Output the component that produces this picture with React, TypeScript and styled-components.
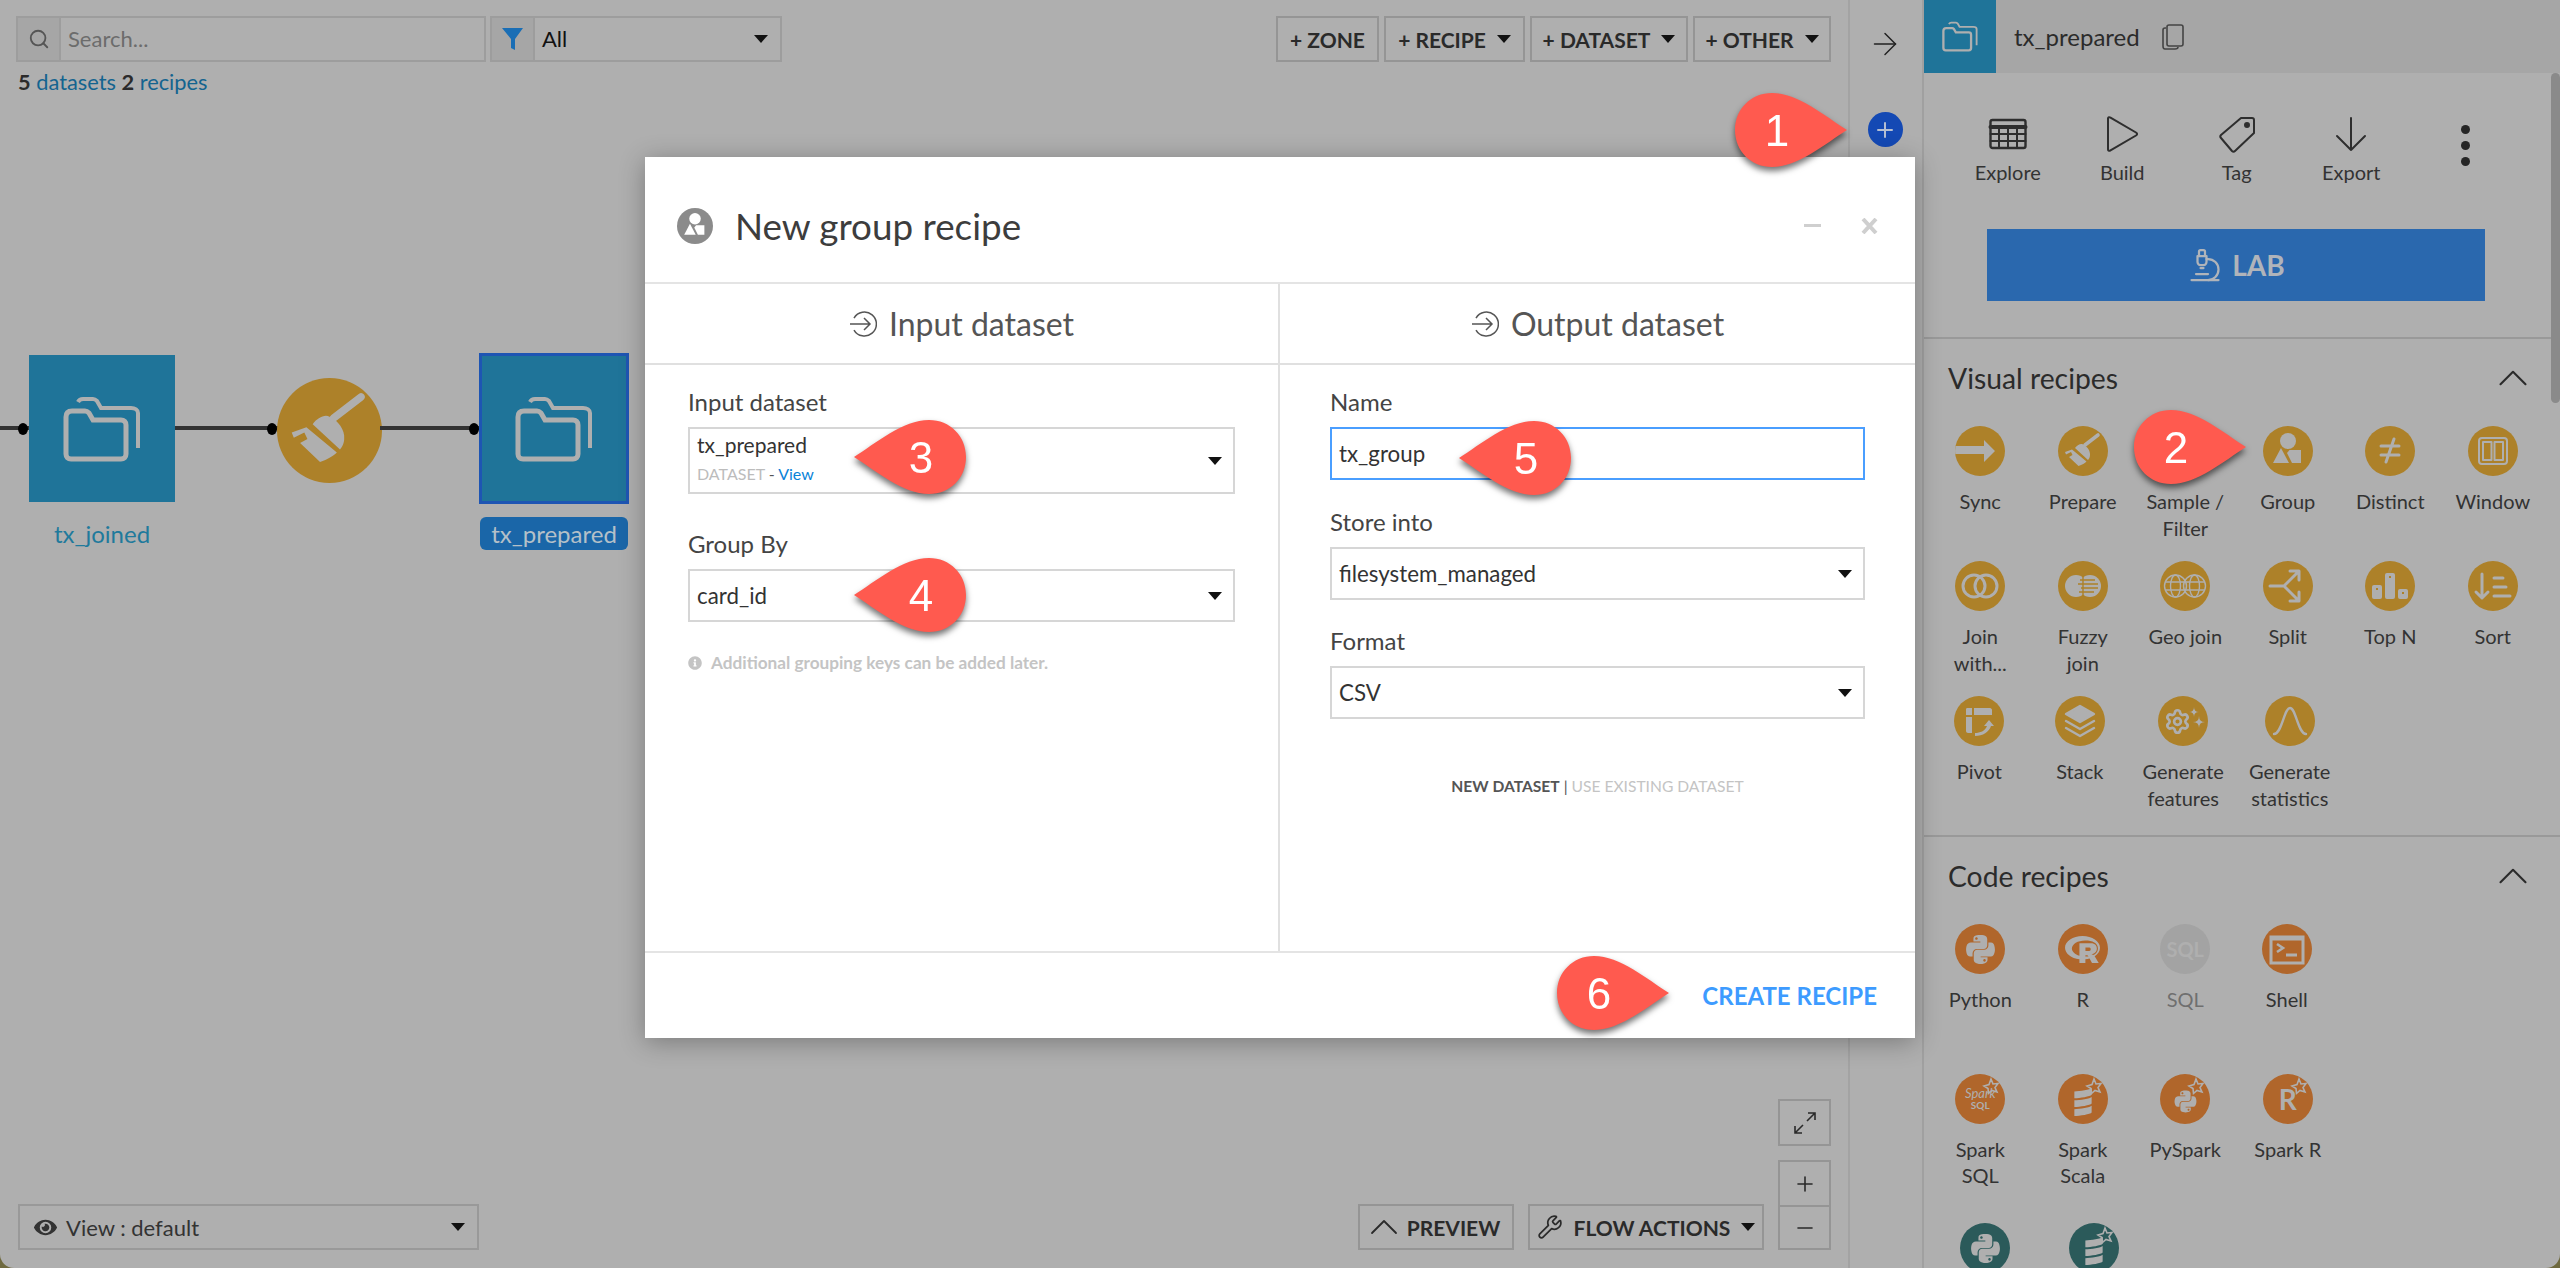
import React from "react";
import styled, { createGlobalStyle } from "styled-components";
import { ArrowRight, ChevronUp, Minus, Microscope, Plus, Search, Settings, Wrench } from "lucide-react";
import { FaEye, FaInfoCircle, FaPython, FaRProject } from "react-icons/fa";
import { SiScala } from "react-icons/si";

const GlobalStyle = createGlobalStyle`
  html, body {
    margin: 0;
    padding: 0;
    background: #6f6a3f;
    font-family: Lato, "Open Sans", sans-serif;
  }
  * {
    box-sizing: border-box;
  }
`;

const Page = styled.div`
  position: relative;
  display: flex;
  width: 2560px;
  height: 1268px;
  overflow: hidden;
  background: #afafaf;
  border-radius: 0 0 14px 14px;
  color: #2b2b2b;
`;

/* ---------- flow area ---------- */
const FlowArea = styled.div`
  position: relative;
  display: flex;
  flex-direction: column;
  width: 1848px;
  padding: 16px 17px 18px 16px;
`;
const TopBar = styled.div`
  position: relative;
  display: flex;
  justify-content: space-between;
  z-index: 1;
`;
const Group = styled.div<{ $gap?: number }>`
  display: flex;
  gap: ${(p) => p.$gap ?? 4}px;
`;
const InputGroup = styled.div<{ $w: number }>`
  display: flex;
  width: ${(p) => p.$w}px;
  height: 46px;
  border: 2px solid #9d9d9d;
`;
const AddOn = styled.div`
  display: flex;
  align-items: center;
  justify-content: center;
  width: 43px;
  background: #a6a6a6;
  border-right: 2px solid #9d9d9d;
  color: #555;
`;
const SearchText = styled.div`
  flex: 1;
  padding-left: 7px;
  font-size: 22px;
  line-height: 42px;
  color: #6c6c6c;
`;
const SelectText = styled.div`
  flex: 1;
  padding-left: 7px;
  font-size: 22px;
  line-height: 42px;
  color: #111;
`;
const CaretBox = styled.div`
  display: flex;
  align-items: center;
  padding-right: 12px;
`;
const Caret = styled.span`
  display: inline-block;
  flex: none;
  width: 0;
  height: 0;
  border-left: 7px solid transparent;
  border-right: 7px solid transparent;
  border-top: 8px solid #111;
`;
const ToolButton = styled.div<{ $w: number }>`
  display: flex;
  align-items: center;
  justify-content: center;
  gap: 11px;
  width: ${(p) => p.$w}px;
  height: 46px;
  border: 2px solid #959595;
  font-size: 21px;
  font-weight: 700;
  color: #2a2a2a;
  white-space: nowrap;
`;
const PreviewChevron = styled(ChevronUp)`
  flex: none;
  margin: 0 -12px 0 -12px;
`;
const Summary = styled.div`
  position: relative;
  z-index: 1;
  margin: 7px 0 0 2px;
  font-size: 21.8px;
  line-height: 26px;
  color: #14648f;
  b {
    color: #2b2b2b;
  }
`;
const BottomBar = styled.div`
  position: relative;
  z-index: 1;
  display: flex;
  align-items: flex-end;
  justify-content: space-between;
  margin-top: auto;
`;
const ViewSelect = styled.div`
  display: flex;
  align-items: center;
  width: 461px;
  height: 46px;
  margin-left: 2px;
  padding-left: 14px;
  border: 2px solid #999;
  font-size: 22px;
  color: #333;
  svg {
    margin-right: 9px;
  }
`;
const ViewLabel = styled.span`
  flex: 1;
`;
const BottomRight = styled.div`
  display: flex;
  align-items: flex-end;
  gap: 14px;
`;
const ZoomStack = styled.div`
  display: flex;
  flex-direction: column;
  gap: 14px;
`;
const ZoomGroup = styled.div`
  display: flex;
  flex-direction: column;
  border: 2px solid #959595;
`;
const ZoomButton = styled.div<{ $split?: boolean }>`
  display: flex;
  align-items: center;
  justify-content: center;
  width: 49px;
  height: 43px;
  color: #2a2a2a;
  border-top: ${(p) => (p.$split ? "2px solid #959595" : "none")};
`;

/* free canvas: the flow diagram */
const Canvas = styled.div`
  position: absolute;
  inset: 0;
`;
const Edge = styled.div<{ $x: number; $w: number }>`
  position: absolute;
  left: ${(p) => p.$x}px;
  top: 426px;
  width: ${(p) => p.$w}px;
  height: 4px;
  background: #333;
`;
const Dot = styled.div<{ $x: number }>`
  position: absolute;
  left: ${(p) => p.$x - 5}px;
  top: 423px;
  width: 10px;
  height: 12px;
  border-radius: 50%;
  background: #000;
`;
const DatasetNode = styled.div<{ $x: number; $y: number; $w: number; $h: number; $selected?: boolean }>`
  position: absolute;
  left: ${(p) => p.$x}px;
  top: ${(p) => p.$y}px;
  display: flex;
  align-items: center;
  justify-content: center;
  width: ${(p) => p.$w}px;
  height: ${(p) => p.$h}px;
  background: #1f7499;
  border: ${(p) => (p.$selected ? "3px solid #1e55b3" : "none")};
`;
const NodeLabel = styled.div<{ $x: number; $y: number; $w: number; $selected?: boolean }>`
  position: absolute;
  left: ${(p) => p.$x}px;
  top: ${(p) => p.$y}px;
  width: ${(p) => p.$w}px;
  height: 33px;
  font-size: 24px;
  line-height: 33px;
  text-align: center;
  border-radius: 6px;
  color: ${(p) => (p.$selected ? "#b4c0c8" : "#1f7a9c")};
  background: ${(p) => (p.$selected ? "#1a66a8" : "transparent")};
`;
const RecipeNode = styled.div`
  position: absolute;
  left: 277px;
  top: 378px;
`;

/* ---------- strip between flow and panel ---------- */
const Strip = styled.div`
  display: flex;
  flex-direction: column;
  align-items: center;
  width: 74px;
  padding: 26px 2px 0 0;
  border-left: 2px solid #a3a3a3;
  color: #222;
`;
const AddCircle = styled.div`
  display: flex;
  align-items: center;
  justify-content: center;
  width: 35px;
  height: 35px;
  margin-top: 50px;
  border-radius: 50%;
  background: #1449b4;
  color: #b5bfd2;
`;

/* ---------- right panel ---------- */
const Panel = styled.div`
  position: relative;
  flex: 1;
  border-left: 2px solid #a0a0a0;
`;
const PanelHeader = styled.div`
  display: flex;
  align-items: center;
  height: 73px;
  background: #a6a6a6;
  font-size: 24px;
  color: #2b2b2b;
`;
const HeaderIcon = styled.div`
  display: flex;
  align-items: center;
  justify-content: center;
  width: 72px;
  height: 73px;
  margin-right: 18px;
  background: #1f7499;
`;
const CopyIcon = styled.svg`
  width: 22px;
  height: 26px;
  margin-left: 22px;
  fill: none;
  stroke: #444;
  stroke-width: 1.6;
`;
const Scrollbar = styled.div`
  position: absolute;
  top: 73px;
  right: 0;
  width: 9px;
  height: 330px;
  border-radius: 5px;
  background: #8a8a8a;
`;
const Actions = styled.div`
  display: flex;
  padding: 39px 0 0 26.5px;
`;
const ActionItem = styled.div`
  display: flex;
  flex-direction: column;
  align-items: center;
  width: 114.5px;
  font-size: 20px;
  line-height: 26px;
  color: #333;
`;
const ActionIcon = styled.svg`
  width: 44px;
  height: 44px;
  margin-bottom: 3px;
  fill: none;
  stroke: #2e2e2e;
  stroke-width: 2;
  stroke-linejoin: round;
  stroke-linecap: round;
`;
const Dots = styled.div`
  display: flex;
  flex-direction: column;
  gap: 7px;
  padding-top: 13px;
`;
const DotMark = styled.span`
  width: 9px;
  height: 9px;
  border-radius: 50%;
  background: #262626;
`;
const LabButton = styled.div`
  display: flex;
  align-items: center;
  justify-content: center;
  gap: 9px;
  width: 498px;
  height: 72px;
  margin: 44px 0 36px 63px;
  background: #2a68ae;
  color: #b0b4ba;
  font-size: 28px;
  font-weight: 700;
`;
const Section = styled.div<{ $rule?: boolean }>`
  padding-bottom: 4px;
  border-top: ${(p) => (p.$rule ? "2px solid #999" : "none")};
`;
const SectionHead = styled.div<{ $h: number }>`
  display: flex;
  align-items: center;
  justify-content: space-between;
  height: ${(p) => p.$h}px;
  padding: 0 22px 10px 24px;
  font-size: 28.3px;
  color: #2b2b2b;
`;
const RecipeGrid = styled.div<{ $row: number }>`
  display: grid;
  grid-template-columns: repeat(6, 102.5px);
  grid-auto-rows: ${(p) => p.$row}px;
  padding-left: 5px;
`;
const RecipeItem = styled.div<{ $nudge?: number }>`
  display: flex;
  flex-direction: column;
  align-items: center;
  transform: translateX(${(p) => p.$nudge ?? 0}px);
`;
const tones: Record<string, string> = {
  gold: "#ad8129",
  orange: "#b0662b",
  gray: "#a3a3a3",
  teal: "#2b5a5a",
  dim: "#8b8b8b",
};
const Disc = styled.div<{ $tone: string; $size?: number; $ink?: string }>`
  position: relative;
  flex: none;
  display: flex;
  flex-direction: column;
  align-items: center;
  justify-content: center;
  width: ${(p) => p.$size ?? 50}px;
  height: ${(p) => p.$size ?? 50}px;
  overflow: hidden;
  border-radius: 50%;
  background: ${(p) => tones[p.$tone]};
  color: ${(p) => p.$ink ?? "#afafaf"};
`;
const Glyph = styled.svg`
  position: absolute;
  inset: 0;
  width: 100%;
  height: 100%;
`;
const RecipeName = styled.div<{ $muted?: boolean }>`
  margin-top: 12px;
  font-size: 20px;
  line-height: 26.5px;
  text-align: center;
  white-space: pre-line;
  color: ${(p) => (p.$muted ? "#6f6f6f" : "#333")};
`;
const DiscWord = styled.span<{ $size: number; $italic?: boolean }>`
  font-size: ${(p) => p.$size}px;
  line-height: 1;
  font-weight: ${(p) => (p.$italic ? 400 : 700)};
  font-style: ${(p) => (p.$italic ? "italic" : "normal")};
`;

/* ---------- modal ---------- */
const Modal = styled.div`
  position: absolute;
  left: 645px;
  top: 157px;
  z-index: 2;
  display: flex;
  flex-direction: column;
  width: 1270px;
  height: 881px;
  background: #fff;
  box-shadow: 0 4px 24px rgba(0, 0, 0, 0.3);
`;
const ModalHeader = styled.div`
  display: flex;
  align-items: center;
  height: 127px;
  padding: 12px 37px 0 32px;
  border-bottom: 2px solid #e4e4e4;
  font-size: 36.8px;
  color: #3d3d3d;
`;
const ModalTitle = styled.div`
  flex: 1;
  margin-left: 22px;
`;
const HeaderMinus = styled.div`
  width: 17px;
  height: 3px;
  margin-right: 40px;
  background: #cfcfcf;
`;
const CloseMark = styled.svg`
  width: 17px;
  height: 16px;
  fill: none;
  stroke: #cfcfcf;
  stroke-width: 4;
`;
const Columns = styled.div`
  flex: 1;
  display: flex;
`;
const Column = styled.div<{ $w: number; $rule?: boolean }>`
  width: ${(p) => p.$w}px;
  border-right: ${(p) => (p.$rule ? "2px solid #e0e0e0" : "none")};
`;
const ColumnHead = styled.div`
  display: flex;
  align-items: center;
  justify-content: center;
  gap: 12px;
  height: 81px;
  border-bottom: 2px solid #e0e0e0;
  font-size: 32px;
  color: #555;
`;
const ArrowInIcon = styled.svg`
  width: 28px;
  height: 28px;
  fill: none;
  stroke: #555;
  stroke-width: 1.5;
`;
const ColumnBody = styled.div<{ $l: number; $r: number }>`
  padding: 24px ${(p) => p.$r}px 0 ${(p) => p.$l}px;
`;
const Field = styled.div<{ $mb: number }>`
  margin-bottom: ${(p) => p.$mb}px;
`;
const FieldLabel = styled.div`
  margin-bottom: 12px;
  font-size: 24px;
  line-height: 26px;
  color: #444;
`;
const SelectBox = styled.div<{ $h?: number; $focus?: boolean }>`
  display: flex;
  align-items: center;
  height: ${(p) => p.$h ?? 53}px;
  padding: 0 11px 0 7px;
  border: 2px solid ${(p) => (p.$focus ? "#4a9eff" : "#d6d6d6")};
  font-size: 22.3px;
  color: #333;
`;
const SelectValue = styled.div`
  flex: 1;
`;
const SubValue = styled.div`
  margin-top: 7px;
  font-size: 16px;
  line-height: 20px;
  color: #bcbcbc;
  a {
    color: #0a83d8;
  }
  span {
    color: #555;
  }
`;
const ValueLine = styled.div`
  margin-top: -4px;
  font-size: 21px;
  line-height: 24px;
`;
const HelpLine = styled.div`
  display: flex;
  align-items: center;
  gap: 9px;
  font-size: 17.2px;
  font-weight: 700;
  color: #c4c4c4;
`;
const DatasetSwitch = styled.div`
  margin-top: 57px;
  font-size: 15.6px;
  line-height: 20px;
  text-align: center;
  color: #c4c4c4;
  b {
    color: #555;
  }
  i {
    font-style: normal;
    color: #555;
  }
`;
const ModalFooter = styled.div`
  display: flex;
  align-items: center;
  justify-content: flex-end;
  height: 87px;
  padding-right: 38px;
  border-top: 2px solid #e4e4e4;
  font-size: 24px;
  font-weight: 700;
  color: #3d9bff;
`;

/* ---------- numbered callouts, they sit over everything ---------- */
const CalloutWrap = styled.div<{ $x: number; $y: number }>`
  position: absolute;
  left: ${(p) => p.$x}px;
  top: ${(p) => p.$y}px;
  z-index: 5;
  width: 112px;
  height: 74px;
  filter: drop-shadow(0 4px 3px rgba(0, 0, 0, 0.55));
`;
const CalloutShape = styled.svg<{ $flip?: boolean }>`
  position: absolute;
  inset: 0;
  transform: ${(p) => (p.$flip ? "scaleX(-1)" : "none")};
  fill: #ff5a4f;
`;
const CalloutNumber = styled.div<{ $flip?: boolean }>`
  position: absolute;
  top: 0;
  ${(p) => (p.$flip ? "right: 15px;" : "left: 12px;")}
  width: 60px;
  height: 74px;
  font-family: "Liberation Sans", Arial, sans-serif;
  font-size: 44px;
  line-height: 76px;
  text-align: center;
  color: #fff;
`;

const Callout = ({ n, x, y, flip }: { n: number; x: number; y: number; flip?: boolean }) => (
  <CalloutWrap $x={x} $y={y}>
    <CalloutShape $flip={flip} width="112" height="74" viewBox="0 0 112 74">
      <path d="M37 0C63 0 90 23 112 37C90 51 63 74 37 74C16 74 0 58 0 37C0 16 16 0 37 0Z" />
    </CalloutShape>
    <CalloutNumber $flip={flip}>{n}</CalloutNumber>
  </CalloutWrap>
);

const Folder = ({ w, h }: { w: number; h: number }) => (
  <svg width={w} height={h} viewBox="0 0 78 66" fill="none" stroke="#afafaf">
    <path
      strokeWidth="5"
      d="M9 15H22C24 15 25 16 26 17L30 24H58C61 24 63 26 63 29V58C63 61 61 63 58 63H8C5 63 3 61 3 58V21C3 17 5 15 9 15Z"
    />
    <path strokeWidth="4" d="M15 6C16 4 18 3 20 3H30C32 3 33 4 34 5L38 12H68C72 12 75 14 75 17V52" />
  </svg>
);

const Broom = () => (
  <Glyph viewBox="0 0 50 50" fill="currentColor">
    <path d="M17 22C19 19 23 17 25 18.5C29 20 32.5 25 32 29C32 31 31 33 30 34Z" />
    <path d="M7 26L14 23.5L28.5 35.5C27 37 24 39 20.5 40L11 31L14.5 29L13 26L8 28.5Z" />
    <path d="M27 19L40 9" stroke="currentColor" strokeWidth="3.6" strokeLinecap="round" />
  </Glyph>
);

const GroupShapes = () => (
  <Glyph viewBox="0 0 50 50" fill="currentColor">
    <circle cx="25" cy="15" r="8" />
    <path d="M18 22L26 37H10Z" />
    <path d="M26.5 24H38V37H29L24 27Z" />
  </Glyph>
);

const SparkStar = () => (
  <Glyph viewBox="0 0 50 50" fill="none" stroke="currentColor" strokeWidth="1.6">
    <path d="M36 5L38 10L43 9.5L40 13.5L42 18L37 16.5L33.5 19.5L33 14.5L29 12L34 10.5Z" />
  </Glyph>
);

const strokeProps = { fill: "none", stroke: "currentColor", strokeWidth: 2.4, strokeLinecap: "round" as const, strokeLinejoin: "round" as const };

const glyphs: Record<string, React.ReactNode> = {
  sync: (
    <Glyph viewBox="0 0 50 50" fill="currentColor">
      <path d="M0 20H29V14L40 25L29 36V28H0Z" />
    </Glyph>
  ),
  prepare: <Broom />,
  sample: (
    <Glyph viewBox="0 0 50 50" fill="currentColor">
      <path d="M12 14H38L28 26V38L22 34V26Z" />
    </Glyph>
  ),
  group: <GroupShapes />,
  distinct: (
    <Glyph viewBox="0 0 50 50" {...strokeProps} strokeWidth={3}>
      <path d="M16 20H34M16 29H34M29 13L21 36" />
    </Glyph>
  ),
  window: (
    <Glyph viewBox="0 0 50 50" {...strokeProps} strokeWidth={2}>
      <rect x="11" y="12" width="28" height="26" rx="3" />
      <rect x="15" y="16" width="8.5" height="18" />
      <rect x="26.5" y="16" width="8.5" height="18" />
    </Glyph>
  ),
  join: (
    <Glyph viewBox="0 0 50 50" {...strokeProps} strokeWidth={3}>
      <circle cx="19" cy="25" r="11" />
      <circle cx="31" cy="25" r="11" />
    </Glyph>
  ),
  fuzzy: (
    <Glyph viewBox="0 0 50 50">
      <circle cx="18" cy="25" r="11" fill="currentColor" />
      <circle cx="32" cy="25" r="11" fill="currentColor" />
      <path d="M22 19H37M20 23H40M23 27H40M21 31H36M25 15V36" stroke="#ad8129" strokeWidth="1.4" fill="none" />
    </Glyph>
  ),
  geo: (
    <Glyph viewBox="0 0 50 50" fill="none" stroke="currentColor" strokeWidth="1.4">
      <circle cx="15.5" cy="25" r="11" />
      <ellipse cx="15.5" cy="25" rx="5" ry="11" />
      <path d="M5 21H26M5 29H26" />
      <circle cx="34.5" cy="25" r="11" />
      <ellipse cx="34.5" cy="25" rx="5" ry="11" />
      <path d="M24 21H45M24 29H45" />
    </Glyph>
  ),
  split: (
    <Glyph viewBox="0 0 50 50" {...strokeProps} strokeWidth={3}>
      <path d="M7 25H21L35 11M21 25L35 39M27 10H36V19M27 40H36V31" />
    </Glyph>
  ),
  topn: (
    <Glyph viewBox="0 0 50 50">
      <rect x="7" y="24" width="10" height="14" rx="2" fill="currentColor" />
      <rect x="20" y="12" width="10" height="26" rx="2" fill="currentColor" />
      <rect x="33" y="28" width="10" height="10" rx="2" fill="currentColor" />
      <path d="M11 28H13M24 16H26M37 32H39" stroke="#ad8129" strokeWidth="2" />
    </Glyph>
  ),
  sort: (
    <Glyph viewBox="0 0 50 50" {...strokeProps} strokeWidth={3}>
      <path d="M14 13V37M8 31L14 37L20 31M26 17H35M26 26H38M26 35H42" />
    </Glyph>
  ),
  pivot: (
    <Glyph viewBox="0 0 50 50" fill="currentColor">
      <path d="M12 13C12 12 13 12 14 12H18V19H12ZM20 12H36C37 12 38 13 38 14V19H20ZM12 21H18V37H14C13 37 12 36 12 35ZM21 37C26 37 31 35 33 30H30L35 24L40 30H37C35 36 29 40 21 40Z" />
    </Glyph>
  ),
  stack: (
    <Glyph viewBox="0 0 50 50" {...strokeProps}>
      <path d="M25 10L39 18L25 26L11 18Z" fill="currentColor" />
      <path d="M11 25L25 33L39 25M11 32L25 40L39 32" />
    </Glyph>
  ),
  stats: (
    <Glyph viewBox="0 0 50 50" {...strokeProps}>
      <path d="M9 38C17 38 19 12 25 12C31 12 33 38 41 38" />
    </Glyph>
  ),
  shell: (
    <Glyph viewBox="0 0 50 50" fill="none" stroke="currentColor">
      <rect x="9" y="13" width="32" height="26" strokeWidth="3" />
      <path d="M15 20L21 24L15 28" strokeWidth="2.6" />
      <path d="M24 31H35" strokeWidth="3" />
      <path d="M9 15H41" strokeWidth="3" />
    </Glyph>
  ),
};

const visualRecipes = [
  { id: "sync", label: "Sync" },
  { id: "prepare", label: "Prepare" },
  { id: "sample", label: "Sample /\nFilter" },
  { id: "group", label: "Group" },
  { id: "distinct", label: "Distinct" },
  { id: "window", label: "Window" },
  { id: "join", label: "Join\nwith..." },
  { id: "fuzzy", label: "Fuzzy\njoin" },
  { id: "geo", label: "Geo join" },
  { id: "split", label: "Split" },
  { id: "topn", label: "Top N" },
  { id: "sort", label: "Sort" },
  { id: "pivot", label: "Pivot", nudge: -1 },
  { id: "stack", label: "Stack", nudge: -3 },
  { id: "features", label: "Generate\nfeatures", nudge: -2 },
  { id: "stats", label: "Generate\nstatistics", nudge: 2 },
];

const featuresGlyph = (
  <>
    <Settings size={27} strokeWidth={2.4} style={{ marginRight: 12 }} />
    <Glyph viewBox="0 0 50 50" fill="currentColor">
      <path d="M36 11Q36 16 41 16Q36 16 36 21Q36 16 31 16Q36 16 36 11ZM41 20Q41 26 47 26Q41 26 41 32Q41 26 35 26Q41 26 41 20Z" />
    </Glyph>
  </>
);

const codeRecipes: { tone: string; label: string; glyph: React.ReactNode; muted?: boolean; nudge?: number }[] = [
  { tone: "orange", label: "Python", glyph: <FaPython size={33} /> },
  { tone: "orange", label: "R", glyph: <FaRProject size={35} /> },
  { tone: "gray", label: "SQL", muted: true, glyph: <DiscWord $size={20}>SQL</DiscWord> },
  { tone: "orange", label: "Shell", glyph: glyphs.shell, nudge: -1 },
  { tone: "gray", label: "", glyph: null },
  { tone: "gray", label: "", glyph: null },
  {
    tone: "orange",
    label: "Spark\nSQL",
    glyph: (
      <>
        <DiscWord $size={13} $italic>
          Spark
        </DiscWord>
        <DiscWord $size={10}>SQL</DiscWord>
        <SparkStar />
      </>
    ),
  },
  {
    tone: "orange",
    label: "Spark\nScala",
    glyph: (
      <>
        <SiScala size={28} style={{ marginTop: 6 }} />
        <SparkStar />
      </>
    ),
  },
  {
    tone: "orange",
    label: "PySpark",
    glyph: (
      <>
        <FaPython size={25} style={{ marginTop: 6 }} />
        <SparkStar />
      </>
    ),
  },
  {
    tone: "orange",
    label: "Spark R",
    glyph: (
      <>
        <DiscWord $size={28}>R</DiscWord>
        <SparkStar />
      </>
    ),
  },
  { tone: "gray", label: "", glyph: null },
  { tone: "gray", label: "", glyph: null },
  { tone: "teal", label: "", glyph: <FaPython size={33} />, nudge: 5 },
  {
    tone: "teal",
    label: "",
    glyph: (
      <>
        <SiScala size={28} style={{ marginTop: 6 }} />
        <SparkStar />
      </>
    ),
    nudge: 11,
  },
];

const ArrowIn = () => (
  <ArrowInIcon viewBox="0 0 28 28">
    <path d="M5 8A12 12 0 1 1 5 20M1 14H21M15 8L21 14L15 20" />
  </ArrowInIcon>
);

const Select = ({ value }: { value: string }) => (
  <SelectBox>
    <SelectValue>{value}</SelectValue>
    <Caret />
  </SelectBox>
);

const App = () => (
  <Page>
    <GlobalStyle />
    <FlowArea>
      <Canvas>
        <Edge $x={0} $w={29} />
        <Dot $x={23} />
        <DatasetNode $x={29} $y={355} $w={146} $h={147}>
          <Folder w={78} h={66} />
        </DatasetNode>
        <NodeLabel $x={29} $y={517} $w={146}>
          tx_joined
        </NodeLabel>
        <Edge $x={175} $w={110} />
        <Dot $x={272} />
        <RecipeNode>
          <Disc $tone="gold" $size={105}>
            <Broom />
          </Disc>
        </RecipeNode>
        <Edge $x={380} $w={100} />
        <Dot $x={474} />
        <DatasetNode $x={479} $y={353} $w={150} $h={151} $selected>
          <Folder w={78} h={66} />
        </DatasetNode>
        <NodeLabel $x={480} $y={517} $w={148} $selected>
          tx_prepared
        </NodeLabel>
      </Canvas>
      <TopBar>
        <Group>
          <InputGroup $w={470}>
            <AddOn>
              <Search size={22} strokeWidth={2} />
            </AddOn>
            <SearchText>Search...</SearchText>
          </InputGroup>
          <InputGroup $w={292}>
            <AddOn>
              <svg width="21" height="22" viewBox="0 0 21 22" fill="#1a6eb5">
                <path d="M0 0H21L13 11V22L9 20V11Z" />
              </svg>
            </AddOn>
            <SelectText>All</SelectText>
            <CaretBox>
              <Caret />
            </CaretBox>
          </InputGroup>
        </Group>
        <Group $gap={5}>
          <ToolButton $w={103}>+ ZONE</ToolButton>
          <ToolButton $w={141}>
            + RECIPE <Caret />
          </ToolButton>
          <ToolButton $w={158}>
            + DATASET <Caret />
          </ToolButton>
          <ToolButton $w={138}>
            + OTHER <Caret />
          </ToolButton>
        </Group>
      </TopBar>
      <Summary>
        <b>5</b> datasets <b>2</b> recipes
      </Summary>
      <BottomBar>
        <ViewSelect>
          <FaEye size={23} />
          <ViewLabel>View : default</ViewLabel>
          <CaretBox>
            <Caret />
          </CaretBox>
        </ViewSelect>
        <BottomRight>
          <ToolButton $w={156}>
            <PreviewChevron size={48} strokeWidth={0.9} /> PREVIEW
          </ToolButton>
          <ToolButton $w={236}>
            <Wrench size={26} strokeWidth={1.6} /> FLOW ACTIONS <Caret />
          </ToolButton>
          <ZoomStack>
            <ZoomGroup>
              <ZoomButton>
                <svg width="24" height="24" viewBox="0 0 24 24" fill="none" stroke="#2a2a2a" strokeWidth="1.6">
                  <path d="M14 10L22 2M15 2H22V9M10 14L2 22M2 15V22H9" />
                </svg>
              </ZoomButton>
            </ZoomGroup>
            <ZoomGroup>
              <ZoomButton>
                <Plus size={24} strokeWidth={1.6} />
              </ZoomButton>
              <ZoomButton $split>
                <Minus size={24} strokeWidth={1.6} />
              </ZoomButton>
            </ZoomGroup>
          </ZoomStack>
        </BottomRight>
      </BottomBar>
    </FlowArea>

    <Strip>
      <ArrowRight size={36} strokeWidth={1} />
      <AddCircle>
        <Plus size={24} strokeWidth={2} />
      </AddCircle>
    </Strip>

    <Panel>
      <Scrollbar />
      <PanelHeader>
        <HeaderIcon>
          <Folder w={36} h={31} />
        </HeaderIcon>
        tx_prepared
        <CopyIcon viewBox="0 0 22 26">
          <path d="M4 4H3C2 4 1 5 1 6V22C1 24 2 25 3 25H13C15 25 16 24 16 23" />
          <rect x="5" y="1" width="16" height="21" rx="2" />
        </CopyIcon>
      </PanelHeader>
      <Actions>
        <ActionItem>
          <ActionIcon viewBox="0 0 44 44">
            <rect x="4.5" y="8" width="35" height="28" rx="2" strokeWidth="2.4" />
            <path d="M4.5 15H39.5" strokeWidth="4" />
            <path d="M4.5 22H39.5M4.5 29H39.5M13 15V36M22 15V36M31 15V36" />
          </ActionIcon>
          Explore
        </ActionItem>
        <ActionItem>
          <ActionIcon viewBox="0 0 44 44">
            <path d="M8 6.5C8 5 9.5 5 10.5 5.6L36 20.5C37.5 21.5 37.5 22.5 36 23.5L10.5 38.4C9.5 39 8 39 8 37.5Z" />
          </ActionIcon>
          Build
        </ActionItem>
        <ActionItem>
          <ActionIcon viewBox="0 0 44 44">
            <path d="M26 6H37C38 6 39 7 39 8V21L20 39C19 40 18 40 17 39L6 26C5 25 5 24 6 23Z" />
            <circle cx="32" cy="13" r="2" fill="#2e2e2e" />
          </ActionIcon>
          Tag
        </ActionItem>
        <ActionItem>
          <ActionIcon viewBox="0 0 44 44">
            <path d="M22 6V38M8 24L22 38L36 24" />
          </ActionIcon>
          Export
        </ActionItem>
        <ActionItem>
          <Dots>
            <DotMark />
            <DotMark />
            <DotMark />
          </Dots>
        </ActionItem>
      </Actions>
      <LabButton>
        <Microscope size={36} strokeWidth={1.5} /> LAB
      </LabButton>
      <Section $rule>
        <SectionHead $h={87}>
          Visual recipes
          <ChevronUp size={50} strokeWidth={1} />
        </SectionHead>
        <RecipeGrid $row={135}>
          {visualRecipes.map((r) => (
            <RecipeItem key={r.id} $nudge={r.nudge}>
              <Disc $tone="gold">{r.id === "features" ? featuresGlyph : glyphs[r.id]}</Disc>
              <RecipeName>{r.label}</RecipeName>
            </RecipeItem>
          ))}
        </RecipeGrid>
      </Section>
      <Section $rule>
        <SectionHead $h={87}>
          Code recipes
          <ChevronUp size={50} strokeWidth={1} />
        </SectionHead>
        <RecipeGrid $row={149.5}>
          {codeRecipes.map((r, i) => (
            <RecipeItem key={i} $nudge={r.nudge}>
              {r.glyph && <Disc $tone={r.tone}>{r.glyph}</Disc>}
              {r.label && <RecipeName $muted={r.muted}>{r.label}</RecipeName>}
            </RecipeItem>
          ))}
        </RecipeGrid>
      </Section>
    </Panel>

    <Modal>
      <ModalHeader>
        <Disc $tone="dim" $size={36} $ink="#fff">
          <GroupShapes />
        </Disc>
        <ModalTitle>New group recipe</ModalTitle>
        <HeaderMinus />
        <CloseMark viewBox="0 0 17 16">
          <path d="M2 1L15 15M15 1L2 15" />
        </CloseMark>
      </ModalHeader>
      <Columns>
        <Column $w={635} $rule>
          <ColumnHead>
            <ArrowIn />
            Input dataset
          </ColumnHead>
          <ColumnBody $l={43} $r={43}>
            <Field $mb={37}>
              <FieldLabel>Input dataset</FieldLabel>
              <SelectBox $h={67}>
                <SelectValue>
                  <ValueLine>tx_prepared</ValueLine>
                  <SubValue>
                    DATASET <span>-</span> <a>View</a>
                  </SubValue>
                </SelectValue>
                <Caret />
              </SelectBox>
            </Field>
            <Field $mb={30}>
              <FieldLabel>Group By</FieldLabel>
              <Select value="card_id" />
            </Field>
            <HelpLine>
              <FaInfoCircle size={14} />
              Additional grouping keys can be added later.
            </HelpLine>
          </ColumnBody>
        </Column>
        <Column $w={635}>
          <ColumnHead>
            <ArrowIn />
            Output dataset
          </ColumnHead>
          <ColumnBody $l={50} $r={50}>
            <Field $mb={29}>
              <FieldLabel>Name</FieldLabel>
              <SelectBox $focus>tx_group</SelectBox>
            </Field>
            <Field $mb={28}>
              <FieldLabel>Store into</FieldLabel>
              <Select value="filesystem_managed" />
            </Field>
            <Field $mb={0}>
              <FieldLabel>Format</FieldLabel>
              <Select value="CSV" />
            </Field>
            <DatasetSwitch>
              <b>NEW DATASET</b> <i>|</i> USE EXISTING DATASET
            </DatasetSwitch>
          </ColumnBody>
        </Column>
      </Columns>
      <ModalFooter>CREATE RECIPE</ModalFooter>
    </Modal>

    <Callout n={1} x={1735} y={93} />
    <Callout n={2} x={2134} y={410} />
    <Callout n={3} x={854} y={420} flip />
    <Callout n={4} x={854} y={558} flip />
    <Callout n={5} x={1459} y={421} flip />
    <Callout n={6} x={1557} y={956} />
  </Page>
);

export default App;
